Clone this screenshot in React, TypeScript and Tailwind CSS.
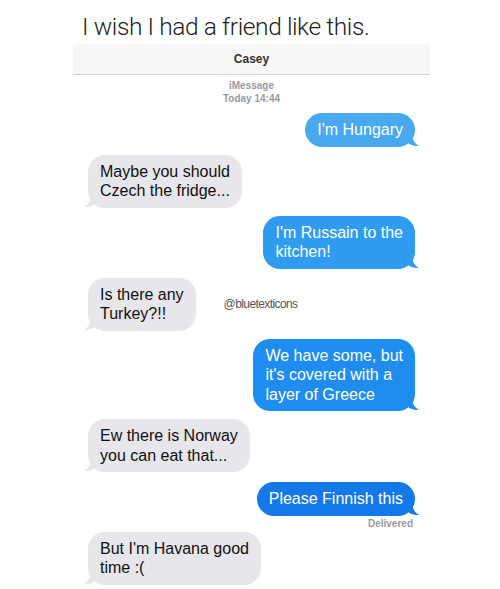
import React from "react";

const BLUE_TAIL = "M0 0 L5 0 C5 7 7 11 12 14 C7 14.5 3 13 0 10 Z";
const GRAY_TAIL = "M12 0 L7 0 C7 7 5 11 0 14 C5 14.5 9 13 12 10 Z";

function Right({ lines, color, className = "" }: { lines: string[]; color: string; className?: string }) {
  return (
    <div className={`flex justify-end ${className}`}>
      <div className="relative">
        <div
          className="relative z-10 rounded-[17px] px-[12px] py-[7px] text-[16px] leading-[19.5px] text-white whitespace-nowrap"
          style={{ backgroundColor: color }}
        >
          {lines.map((l, i) => (
            <div key={i}>{l}</div>
          ))}
        </div>
        <svg className="absolute right-[-4px] bottom-0 z-0" width="12" height="15" viewBox="0 0 12 15">
          <path d={BLUE_TAIL} fill={color} />
        </svg>
      </div>
    </div>
  );
}

function Left({ lines, className = "", aside }: { lines: string[]; className?: string; aside?: React.ReactNode }) {
  return (
    <div className={`flex items-center ${className}`}>
      <div className="relative">
        <div className="relative z-10 rounded-[17px] bg-[#e6e6eb] px-[12px] py-[7px] text-[16px] leading-[19.5px] text-[#111] whitespace-nowrap">
          {lines.map((l, i) => (
            <div key={i}>{l}</div>
          ))}
        </div>
        <svg className="absolute left-[-4px] bottom-0 z-0" width="12" height="15" viewBox="0 0 12 15">
          <path d={GRAY_TAIL} fill="#e6e6eb" />
        </svg>
      </div>
      {aside}
    </div>
  );
}

export default function App() {
  return (
    <div className="w-[500px] h-[589px] overflow-hidden bg-white" style={{ fontFamily: '"Liberation Sans", Arial, sans-serif' }}>
      <div
        className="pl-[82px] pt-[12px] h-[44px] text-[24.5px] font-light leading-[30px] text-[#1e1e1e] tracking-[-0.4px]"
        style={{ fontFamily: 'Roboto, "Liberation Sans", sans-serif' }}
      >
        I wish I had a friend like this.
      </div>
      <div className="ml-[73px] w-[357px]">
        <div className="h-[31px] bg-[#f7f7f7] border-b border-[#d4d4d4] flex items-center justify-center text-[12px] font-bold text-[#333]">
          Casey
        </div>
        <div className="mt-[4px] flex flex-col items-center text-[10px] leading-[13px] font-bold text-[#9a9a9f]">
          <div>iMessage</div>
          <div>Today 14:44</div>
        </div>
        <div className="px-[15px] pt-[8px] flex flex-col">
          <Right lines={["I'm Hungary"]} color="#48a9ef" />
          <Left className="mt-[8px]" lines={["Maybe you should", "Czech the fridge..."]} />
          <Right className="mt-[8px]" lines={["I'm Russain to the", "kitchen!"]} color="#2f9cf0" />
          <Left
            className="mt-[9px]"
            lines={["Is there any", "Turkey?!!"]}
            aside={<div className="ml-[28px] text-[12px] text-[#555] tracking-[-0.6px]">@bluetexticons</div>}
          />
          <Right className="mt-[8px]" lines={["We have some, but", "it's covered with a", "layer of Greece"]} color="#1f8df0" />
          <Left className="mt-[8px]" lines={["Ew there is Norway", "you can eat that..."]} />
          <Right className="mt-[10px]" lines={["Please Finnish this"]} color="#1479e8" />
          <div className="mt-[2px] text-right text-[10px] leading-[12px] font-bold text-[#9a9a9f] pr-[2px]">Delivered</div>
          <Left className="mt-[2px]" lines={["But I'm Havana good", "time :("]} />
        </div>
      </div>
    </div>
  );
}
